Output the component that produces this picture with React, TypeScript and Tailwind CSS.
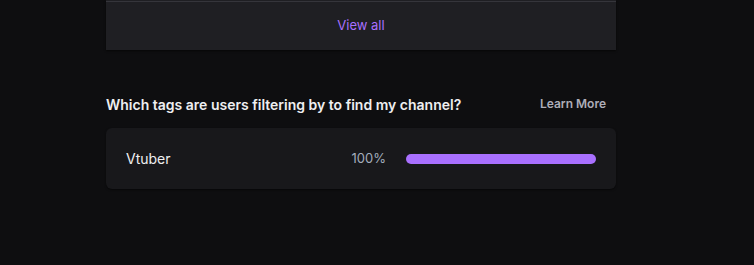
export default function App() {
  return (
    <div
      className="min-h-[265px] w-full bg-[#0e0e10] text-[#efeff1]"
      style={{ fontFamily: "Inter, 'Liberation Sans', sans-serif" }}
    >
      <div className="ml-[106px] w-[510px]">
        <div className="bg-[#1f1f23] shadow-[0_1px_2px_rgba(0,0,0,0.6)]">
          <div className="h-px" />
          <div className="h-px bg-[#35353b]" />
          <div className="flex h-[48px] items-center justify-center">
            <span className="text-[13px] text-[#a970ff]">View all</span>
          </div>
        </div>

        <div className="mt-[44px] flex h-[20px] items-center justify-between">
          <h3 className="text-[14px] font-semibold">Which tags are users filtering by to find my channel?</h3>
          <span className="pr-[10px] text-[12px] font-semibold text-[#adadb8]">Learn More</span>
        </div>

        <div className="mt-[14px] flex h-[61px] items-center rounded-md bg-[#18181b] px-5 shadow-[0_1px_2px_rgba(0,0,0,0.5)]">
          <span className="flex-1 text-[14px]">Vtuber</span>
          <span className="text-[13px] text-[#a3adbc]">100%</span>
          <div className="ml-5 h-[10px] w-[190px] rounded-full bg-[#a970ff]" />
        </div>
      </div>
    </div>
  );
}
